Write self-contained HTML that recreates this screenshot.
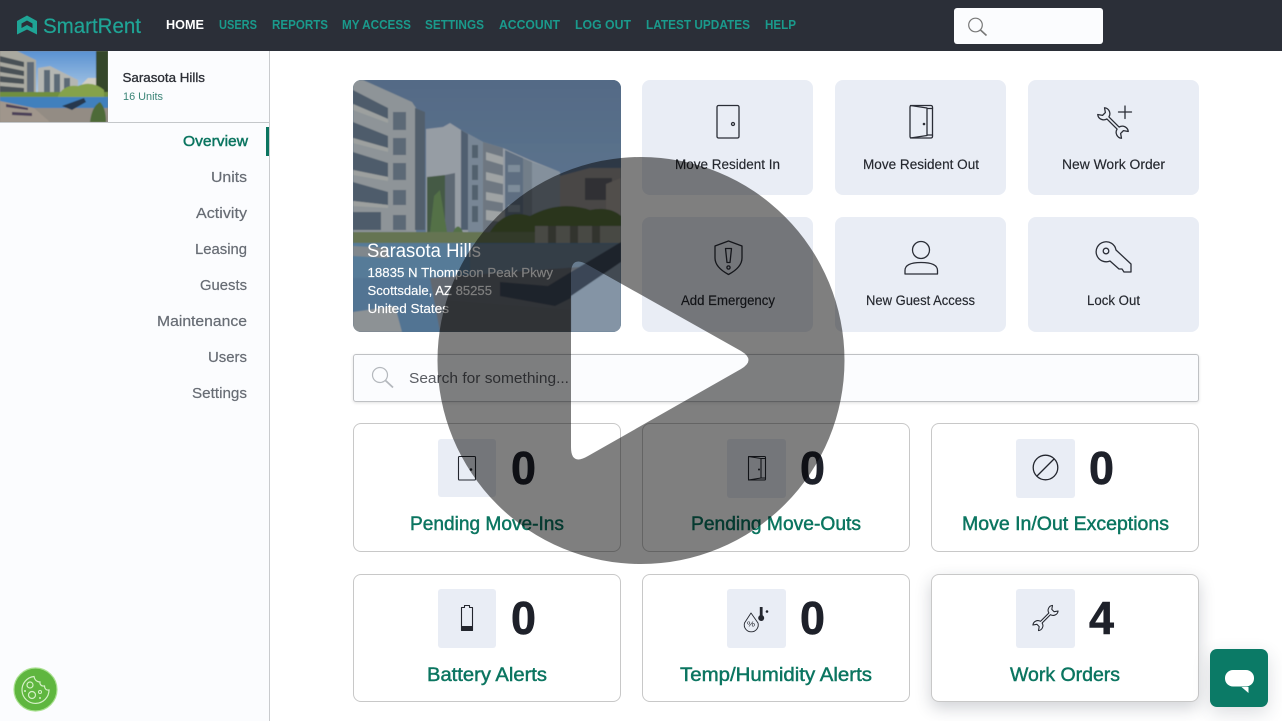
<!DOCTYPE html>
<html lang="en"><head><meta charset="utf-8"><title>SmartRent</title>
<style>
html,body{margin:0;padding:0;background:#fff;width:1282px;height:721px;overflow:hidden}
body{position:relative;font-family:"Liberation Sans",sans-serif}
.b{position:absolute;box-sizing:border-box}
.a{background:#e9edf5;border-radius:8px}
.c{background:#fff;border:1px solid #c8c8c8;border-radius:8px}
.t{background:#e9edf5;border-radius:3px;width:59px;height:59px}
svg{position:absolute;left:0;top:0}
text{font-family:"Liberation Sans",sans-serif}
.nav{font-size:13px;font-weight:700;fill:#1a9a8c}
.side{font-size:15px;fill:#676c74;stroke:#676c74;stroke-width:.2}
.al{font-size:13.5px;fill:#24272e;stroke:#24272e;stroke-width:.15}
.n{font-size:46px;font-weight:700;fill:#1e212a;stroke:#1e212a;stroke-width:.6}
.l{font-size:19px;fill:#0b7560;stroke:#0b7560;stroke-width:.45}
.i{fill:none;stroke:#2a2d36;stroke-width:1.3;stroke-linejoin:round;stroke-linecap:round}
.s{fill:none;stroke:#23262e;stroke-width:1.1;stroke-linejoin:round;stroke-linecap:round}
</style></head>
<body>
<div class="b" style="left:0;top:0;width:1282px;height:51px;background:#2b2f38"></div>
<div class="b" style="left:0;top:51px;width:270px;height:670px;background:#fbfcfe;border-right:1px solid #c9cbce"></div>
<div class="b" style="left:0;top:122px;width:269px;height:1px;background:#c4c7ca"></div>
<div class="b" style="left:266px;top:127px;width:3px;height:29px;background:#0b7560"></div>
<div class="b" style="left:954px;top:8px;width:149px;height:36px;background:#fbfcfe;border-radius:3px"></div>

<div class="b a" style="left:642px;top:80px;width:171px;height:115px"></div>
<div class="b a" style="left:835px;top:80px;width:171px;height:115px"></div>
<div class="b a" style="left:1028px;top:80px;width:171px;height:115px"></div>
<div class="b a" style="left:642px;top:217px;width:171px;height:115px"></div>
<div class="b a" style="left:835px;top:217px;width:171px;height:115px"></div>
<div class="b a" style="left:1028px;top:217px;width:171px;height:115px"></div>

<div class="b" style="left:353px;top:354px;width:846px;height:48px;background:#fbfcfe;border:1px solid #bfc1c4;border-radius:3px;box-shadow:0 1px 3px rgba(0,0,0,.12)"></div>

<div class="b c" style="left:353px;top:423px;width:268px;height:129px"></div>
<div class="b c" style="left:642px;top:423px;width:268px;height:129px"></div>
<div class="b c" style="left:931px;top:423px;width:268px;height:129px"></div>
<div class="b c" style="left:353px;top:574px;width:268px;height:128px"></div>
<div class="b c" style="left:642px;top:574px;width:268px;height:128px"></div>
<div class="b c" style="left:931px;top:574px;width:268px;height:128px;box-shadow:0 6px 16px rgba(40,50,70,.22)"></div>
<div class="b t" style="left:438px;top:439px;width:58px;height:58px"></div>
<div class="b t" style="left:727px;top:439px"></div>
<div class="b t" style="left:1016px;top:439px"></div>
<div class="b t" style="left:438px;top:589px;width:58px"></div>
<div class="b t" style="left:727px;top:589px"></div>
<div class="b t" style="left:1016px;top:589px"></div>

<svg width="1282" height="721" viewBox="0 0 1282 721">
<defs>
<clipPath id="pc"><rect x="353" y="80" width="268" height="252" rx="8"/></clipPath>
<clipPath id="th"><rect x="0" y="51" width="108" height="71"/></clipPath>
<filter id="bl" x="-5%" y="-5%" width="110%" height="110%"><feGaussianBlur stdDeviation=".6"/></filter>
<linearGradient id="sky" x1="0" y1="0" x2="0" y2="1"><stop offset="0" stop-color="#5a92d2"/><stop offset="1" stop-color="#b4cfe8"/></linearGradient>
<linearGradient id="sky2" x1="0" y1="0" x2="0" y2="1"><stop offset="0" stop-color="#5c7591"/><stop offset="1" stop-color="#6c859f"/></linearGradient>
<path id="wr" d="M9 -1.800A7.500 7.500 0 0 1 21 -6L16 -2.500V2.500L21 6A7.500 7.500 0 0 1 9 1.800H-9A7.500 7.500 0 0 1 -21 6L-16 2.500V-2.500L-21 -6A7.500 7.500 0 0 1 -9 -1.800Z"/>
</defs>

<!-- logo -->
<path d="M27 15.500L37 21V34.500L27 29.500L17 34.500V21Z" fill="#1fa596"/>
<path d="M27 20.500L32.500 23.500V28L27 25L21.500 28V23.500Z" fill="#2b2f38"/>
<text x="43" y="33" font-size="21.500" fill="#1fa596" stroke="#1fa596" stroke-width=".2" textLength="98" lengthAdjust="spacingAndGlyphs">SmartRent</text>

<!-- nav -->
<text class="nav" x="166" y="29" textLength="38" lengthAdjust="spacingAndGlyphs" style="fill:#fff">HOME</text>
<text class="nav" x="219" y="29" textLength="38" lengthAdjust="spacingAndGlyphs">USERS</text>
<text class="nav" x="272" y="29" textLength="56" lengthAdjust="spacingAndGlyphs">REPORTS</text>
<text class="nav" x="342" y="29" textLength="69" lengthAdjust="spacingAndGlyphs">MY ACCESS</text>
<text class="nav" x="425" y="29" textLength="59" lengthAdjust="spacingAndGlyphs">SETTINGS</text>
<text class="nav" x="499" y="29" textLength="61" lengthAdjust="spacingAndGlyphs">ACCOUNT</text>
<text class="nav" x="575" y="29" textLength="56" lengthAdjust="spacingAndGlyphs">LOG OUT</text>
<text class="nav" x="646" y="29" textLength="104" lengthAdjust="spacingAndGlyphs">LATEST UPDATES</text>
<text class="nav" x="765" y="29" textLength="31" lengthAdjust="spacingAndGlyphs">HELP</text>

<!-- top search icon -->
<circle cx="975.500" cy="25" r="6.800" fill="none" stroke="#777" stroke-width="1.200"/>
<path d="M980.500 30L986.500 35.500" stroke="#777" stroke-width="1.600"/>

<!-- thumbnail -->
<g clip-path="url(#th)"><rect x="0" y="51" width="108" height="71" fill="#8f8a82"/><g filter="url(#bl)">
<rect x="0" y="51" width="108" height="46" fill="url(#sky)"/>
<path d="M0 51H17L36 60V96H0Z" fill="#a9a9a0"/>
<path d="M0 56L24 62V67L0 62ZM0 66L24 71V76L0 72ZM0 76L24 79V84L0 82ZM0 86L24 88V93L0 92Z" fill="#4a5157"/>
<path d="M27 62H34V96H27Z" fill="#5e6b76"/>
<path d="M38 68L50 66L62 72L78 80V96H38Z" fill="#b4b6b2"/>
<path d="M44 70H50V94H44ZM54 74H60V94H54ZM64 78H70V94H64Z" fill="#5c6a76"/>
<path d="M82 84L88 78H100V92H82Z" fill="#d0cdc2"/>
<path d="M96 51H108V98H96Z" fill="#34462a"/>
<path d="M0 92H108V99H0Z" fill="#6f8f40"/>
<path d="M58 96Q64 84 78 86Q92 80 104 90V98H58Z" fill="#85a24c"/>
<rect x="0" y="97" width="108" height="11" fill="#3f80bd"/>
<rect x="0" y="108" width="108" height="14" fill="#938c84"/>
<path d="M0 101L34 108L50 122H0Z" fill="#a0968c"/>
<path d="M6 104L28 108V110L6 107ZM12 112L32 113V116L12 115Z" fill="#4c4158"/>
<path d="M62 106L84 98L86 102L72 110Z" fill="#26384e"/>
<path d="M90 122Q92 106 100 102Q106 108 106 122Z" fill="#4e6b38"/>
</g></g>

<text x="122.500" y="82" font-size="13" fill="#2c2f36" stroke="#2c2f36" stroke-width=".3" textLength="82.500" lengthAdjust="spacingAndGlyphs">Sarasota Hills</text>
<text x="123" y="100" font-size="11" fill="#3b8577" textLength="40" lengthAdjust="spacingAndGlyphs">16 Units</text>

<!-- side nav -->
<text class="side" x="183" y="146" style="fill:#0b7560;stroke:#0b7560;stroke-width:.45" textLength="65" lengthAdjust="spacingAndGlyphs">Overview</text>
<text class="side" x="211" y="182" textLength="36" lengthAdjust="spacingAndGlyphs">Units</text>
<text class="side" x="196" y="218" textLength="51" lengthAdjust="spacingAndGlyphs">Activity</text>
<text class="side" x="195" y="254" textLength="52" lengthAdjust="spacingAndGlyphs">Leasing</text>
<text class="side" x="200" y="290" textLength="47" lengthAdjust="spacingAndGlyphs">Guests</text>
<text class="side" x="157" y="326" textLength="90" lengthAdjust="spacingAndGlyphs">Maintenance</text>
<text class="side" x="208" y="362" textLength="39" lengthAdjust="spacingAndGlyphs">Users</text>
<text class="side" x="192" y="398" textLength="55" lengthAdjust="spacingAndGlyphs">Settings</text>

<!-- main photo -->
<g clip-path="url(#pc)"><rect x="353" y="80" width="268" height="252" fill="#5d7b96"/><g filter="url(#bl)">
<rect x="353" y="80" width="268" height="175" fill="url(#sky2)"/>
<!-- left building -->
<path d="M353 80H363L412 102L416 108V236H353Z" fill="#9fa5a6"/>
<path d="M353 90L388 108V119L353 104ZM353 122L388 136V148L353 138ZM353 152L388 163V177L353 170ZM353 182L388 192V205L353 201ZM353 212H381V230H353Z" fill="#566572"/>
<path d="M353 104L388 119V123L353 110ZM353 138L388 148V152L353 143ZM353 170L388 177V181L353 175ZM353 201L388 205V208L353 206Z" fill="#b0b3ae"/>
<path d="M393 112H406V130H393ZM393 138H406V155H393ZM393 163H406V180H393ZM393 190H406V205H393ZM393 215H406V230H393Z" fill="#66737f"/>
<path d="M415 108L425 112V230H415Z" fill="#5a6873"/>
<!-- middle building -->
<path d="M426 129L443 127L450 123L461 130L483 142L503 148L530 160L560 172V236H426Z" fill="#a8afb4"/>
<path d="M461 130L468 134V230H461Z" fill="#586878"/>
<path d="M468 134L483 142V232H468Z" fill="#8695a2"/>
<path d="M472 145H478V158H472ZM472 165H478V180H472ZM472 185H478V200H472ZM472 206H478V222H472Z" fill="#5a6a76"/>
<path d="M483 142L503 148V232H483Z" fill="#7a848b"/>
<path d="M486 152L503 157V165L486 160ZM486 172L503 176V184L486 180ZM486 192L503 195V203L486 200ZM486 210L503 212V222L486 220Z" fill="#b2b6b4"/>
<path d="M505 150L523 158V232H505Z" fill="#67798b"/>
<path d="M508 165H520V172H508ZM508 185H520V192H508ZM508 205H520V212H508Z" fill="#8d9ca8"/>
<path d="M523 158L532 162V232H523Z" fill="#7f8b95"/>
<path d="M532 162L560 172V232H532Z" fill="#93a0aa"/>
<path d="M427 177L445 175V235H427Z" fill="#4b6247"/>
<path d="M445 175L455 173V235H445Z" fill="#68737b"/>
<path d="M434 196L440 190L447 232H430Z" fill="#5b7c4a"/>
<path d="M452 235Q458 218 464 235Z" fill="#5b7c4a"/>
<!-- right distant -->
<path d="M560 176L590 168H621V232H560Z" fill="#a49e98"/>
<path d="M585 178H612V200H585Z" fill="#6b6a70"/>
<path d="M606 184L621 178V232H606Z" fill="#b7aea4"/>
<path d="M490 232Q505 208 530 216Q560 200 590 210Q610 206 621 216V234H490Z" fill="#5b7439"/>
<rect x="535" y="226" width="86" height="22" fill="#a1a294"/>
<path d="M548 226H556V248H548ZM570 226H578V248H570ZM592 226H600V248H592Z" fill="#6f7362"/>
<!-- hedge + pool -->
<path d="M353 232H535V244H353Z" fill="#6f8056"/>
<rect x="353" y="243" width="268" height="35" fill="#5e88a6"/>
<path d="M353 246L388 248V258L353 256Z" fill="#8f9698"/>
<rect x="470" y="244" width="151" height="34" fill="#73899b"/>
<path d="M353 278H430L440 332H400L395 312H353Z" fill="#5a80a0"/>
<path d="M430 278L621 264V332H440Z" fill="#6d7278"/>
<path d="M353 312L395 306L402 332H353Z" fill="#9ea3a3"/>
<path d="M500 282L548 286L571 272L621 242V262L575 296L555 306L500 296Z" fill="#3f4c5a"/>
<path d="M571 296L621 262V332H571Z" fill="#93a5b5"/>
<path d="M440 300L571 310V332H440Z" fill="#6b6f74"/>
</g>
<rect x="353" y="80" width="268" height="252" fill="#1c2a3a" fill-opacity=".13"/></g>

<text x="367" y="257" font-size="19" fill="#fff" textLength="114" lengthAdjust="spacingAndGlyphs">Sarasota Hills</text>
<text x="367.500" y="277" font-size="13" fill="#fff" stroke="#fff" stroke-width=".15" textLength="185.500" lengthAdjust="spacingAndGlyphs">18835 N Thompson Peak Pkwy</text>
<text x="367.500" y="295" font-size="13" fill="#fff" stroke="#fff" stroke-width=".15" textLength="124.500" lengthAdjust="spacingAndGlyphs">Scottsdale, AZ 85255</text>
<text x="367.500" y="313" font-size="13" fill="#fff" stroke="#fff" stroke-width=".15" textLength="81.500" lengthAdjust="spacingAndGlyphs">United States</text>

<!-- action icons -->
<rect x="717" y="105.500" width="22" height="32.500" rx="1.500" class="i"/>
<circle cx="733" cy="124" r="1.500" class="i"/>

<rect x="910" y="105.500" width="22.500" height="32.500" rx="1.500" class="i"/>
<path d="M910.500 105.500L927 108V135.500L910.500 138M927 108.500H932.500M927 135H932.500" class="i"/>
<circle cx="924" cy="124" r="1.300" fill="#2a2d36"/>

<g transform="translate(1113,123) rotate(45) scale(.8)"><use href="#wr" class="i" style="stroke-width:1.600"/></g>
<path d="M1125 106V118.500M1118.500 112H1131.500" class="i"/>

<path d="M728.500 241L742 246V258C742 266 735 271 728.500 274.500C722 271 715 266 715 258V246Z" class="i"/>
<path d="M725.500 248.500H731.500L730 262.500H727Z" class="i"/>
<circle cx="728.500" cy="267.500" r="1.600" class="i"/>

<circle cx="921" cy="250" r="8.500" class="i"/>
<path d="M905 274V270.500C905 265 910 262.500 921 262.500C932 262.500 937.500 265 937.500 270.500V274Z" class="i"/>

<path d="M1116 250L1131 264V272H1124L1122 269H1119L1110 261A10 10 0 1 1 1116 250Z" class="i"/>
<circle cx="1106" cy="251" r="2.800" class="i"/>

<!-- action labels -->
<text class="al" x="675" y="169" textLength="105" lengthAdjust="spacingAndGlyphs">Move Resident In</text>
<text class="al" x="863" y="169" textLength="116" lengthAdjust="spacingAndGlyphs">Move Resident Out</text>
<text class="al" x="1062" y="169" textLength="103" lengthAdjust="spacingAndGlyphs">New Work Order</text>
<text class="al" x="681" y="305" textLength="94" lengthAdjust="spacingAndGlyphs">Add Emergency</text>
<text class="al" x="866" y="305" textLength="109" lengthAdjust="spacingAndGlyphs">New Guest Access</text>
<text class="al" x="1087" y="305" textLength="53" lengthAdjust="spacingAndGlyphs">Lock Out</text>

<!-- search -->
<circle cx="380" cy="375" r="7.500" fill="none" stroke="#b4b8bd" stroke-width="1.200"/>
<path d="M385.500 380.500L393 387.500" stroke="#b4b8bd" stroke-width="1.800"/>
<text x="409" y="383" font-size="14.500" fill="#5a5d63" textLength="160" lengthAdjust="spacingAndGlyphs">Search for something...</text>

<!-- stat icons -->
<rect x="458.500" y="456.500" width="17" height="23.500" rx="1" class="s"/>
<circle cx="471" cy="469.500" r="1.300" fill="#23262e"/>
<rect x="748.500" y="456.500" width="17" height="23.500" rx="1" class="s"/>
<path d="M748.500 456.500L761 458.500V478L748.500 480M761 458.500H765M761 478H765" class="s"/>
<circle cx="759" cy="469.500" r="1" fill="#23262e"/>
<circle cx="1045.500" cy="467.500" r="12.300" class="s" style="stroke-width:1.300"/>
<path d="M1037 476L1054 459" class="s" style="stroke-width:1.300"/>

<path d="M461.500 607.500H464.500V605.500H469.500V607.500H472.500V630.500H461.500Z" class="s"/>
<rect x="461.500" y="626" width="11" height="5" fill="#23262e"/>

<path d="M751 613L758 623A7 7 0 1 1 744.500 623Z" class="s" style="stroke-width:.9"/>
<text x="747" y="626.500" font-size="7" fill="#23262e" textLength="8" lengthAdjust="spacingAndGlyphs">%</text>
<rect x="759.800" y="607" width="2.800" height="11" fill="#23262e"/>
<circle cx="761.200" cy="618" r="3" fill="#23262e"/>
<circle cx="767" cy="611.500" r="1.300" fill="#23262e"/>

<g transform="translate(1045.500,618) rotate(-45) scale(.66)"><use href="#wr" class="s" style="stroke-width:1.600"/></g>

<!-- numbers -->
<text class="n" x="511" y="484" textLength="25" lengthAdjust="spacingAndGlyphs">0</text>
<text class="n" x="800" y="484" textLength="25" lengthAdjust="spacingAndGlyphs">0</text>
<text class="n" x="1089" y="484" textLength="25" lengthAdjust="spacingAndGlyphs">0</text>
<text class="n" x="511" y="634" textLength="25" lengthAdjust="spacingAndGlyphs">0</text>
<text class="n" x="800" y="634" textLength="25" lengthAdjust="spacingAndGlyphs">0</text>
<text class="n" x="1089" y="634" textLength="25" lengthAdjust="spacingAndGlyphs">4</text>

<!-- stat labels -->
<text class="l" x="410" y="530" textLength="154" lengthAdjust="spacingAndGlyphs">Pending Move-Ins</text>
<text class="l" x="691" y="530" textLength="170" lengthAdjust="spacingAndGlyphs">Pending Move-Outs</text>
<text class="l" x="962" y="530" textLength="207" lengthAdjust="spacingAndGlyphs">Move In/Out Exceptions</text>
<text class="l" x="427" y="681" textLength="120" lengthAdjust="spacingAndGlyphs">Battery Alerts</text>
<text class="l" x="680" y="681" textLength="192" lengthAdjust="spacingAndGlyphs">Temp/Humidity Alerts</text>
<text class="l" x="1010" y="681" textLength="110" lengthAdjust="spacingAndGlyphs">Work Orders</text>
</svg>

<!-- play overlay: triangle is a transparent hole -->
<svg width="1282" height="721" viewBox="0 0 1282 721">
<path fill="#000" fill-opacity=".5" fill-rule="evenodd" d="M641 157A203.500 203.500 0 1 0 641 564A203.500 203.500 0 1 0 641 157ZM571 274Q571 255 588 265L741 351Q756 360 741 369L588 456Q571 466 571 447Z"/>
</svg>

<!-- chat -->
<div class="b" style="left:1210px;top:649px;width:58px;height:58px;background:#0b7a66;border-radius:7px;box-shadow:0 6px 18px rgba(40,50,70,.16)"></div>
<svg width="1282" height="721" viewBox="0 0 1282 721">
<rect x="1225" y="670" width="29" height="16.500" rx="8" fill="#fff"/>
<path d="M1241.500 687H1248.500V693Z" fill="#fff"/>
<circle cx="35.500" cy="689.500" r="21.500" fill="#5fb63f" stroke="#a8e08f" stroke-width="1.200"/>
<path d="M34 676.500A13.500 13.500 0 1 0 49 690C46 690.500 44.500 688.500 44.500 686C41.500 686.500 39.500 684.500 40 682C36.500 682 34.500 679.500 34 676.500Z" fill="none" stroke="#d4f0c6" stroke-width="1.200"/>
<circle cx="30" cy="685" r="3" fill="none" stroke="#d4f0c6" stroke-width="1.200"/>
<circle cx="32" cy="695" r="3.500" fill="none" stroke="#d4f0c6" stroke-width="1.200"/>
<circle cx="40" cy="692" r="1.500" fill="none" stroke="#d4f0c6" stroke-width="1"/>
<circle cx="25" cy="691" r="1" fill="#d4f0c6"/>
<circle cx="40" cy="698" r="1" fill="#d4f0c6"/>
</svg>
</body></html>
